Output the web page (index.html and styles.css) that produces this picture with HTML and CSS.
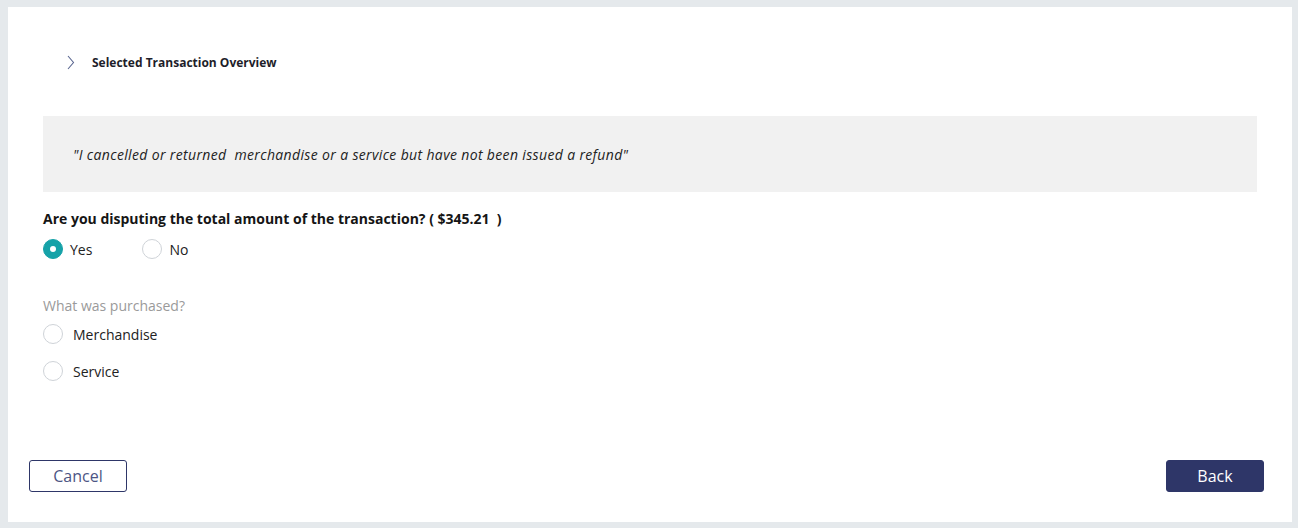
FILE: index.html
```html
<!DOCTYPE html>
<html lang="en">
<head>
    <meta charset="UTF-8">
    <meta name="viewport" content="width=device-width, initial-scale=1.0">
    <title>Dispute Transaction</title>
    <link rel="stylesheet" href="styles.css">
</head>
<body>
    <div class="panel">
        <div class="overview">
            <svg class="chevron" width="8" height="15" viewBox="0 0 8 15">
                <path d="M1 1 L6.5 7.5 L1 14" fill="none" stroke="#5a6690" stroke-width="1.1"/>
            </svg>
            <span class="overview-title">Selected Transaction Overview</span>
        </div>

        <div class="quote">
            <p>"I cancelled or returned&nbsp; merchandise or a service but have not been issued a refund"</p>
        </div>

        <div class="question">Are you disputing the total amount of the transaction? ( $345.21&nbsp; )</div>
        <div class="radio-row">
            <label class="radio"><span class="dot checked"></span>Yes</label>
            <label class="radio no"><span class="dot"></span>No</label>
        </div>

        <div class="sub-label">What was purchased?</div>
        <div class="radio-list">
            <label class="radio wide"><span class="dot"></span>Merchandise</label>
            <label class="radio wide"><span class="dot"></span>Service</label>
        </div>

        <div class="actions">
            <button class="btn btn-outline">Cancel</button>
            <button class="btn btn-primary">Back</button>
        </div>
    </div>
</body>
</html>
```

FILE: styles.css
```css
html, body {
    height: 100%;
}

body {
    margin: 0;
    padding: 7px 6px 6px 8px;
    box-sizing: border-box;
    background-color: #e5e9ec;
    font-family: "Open Sans", "Noto Sans", sans-serif;
    color: #1a1a1a;
}

.panel {
    background-color: #ffffff;
    height: 100%;
    box-sizing: border-box;
    padding: 0 35px 0 35px;
    display: flex;
    flex-direction: column;
}

.overview {
    display: flex;
    align-items: center;
    height: 110px;
    padding-left: 24px;
    padding-top: 1px;
    box-sizing: border-box;
}

.overview .chevron {
    margin-right: 17px;
}

.overview-title {
    font-size: 12px;
    font-weight: 700;
    color: #1e1e2a;
}

.quote {
    background-color: #f1f1f1;
    height: 76px;
    display: flex;
    align-items: center;
    padding-left: 30px;
    margin-top: -1px;
}

.quote p {
    margin: 0;
    font-size: 14px;
    font-style: italic;
    color: #222;
    letter-spacing: 0.35px;
}

.question {
    margin-top: 17px;
    font-size: 14px;
    font-weight: 700;
    color: #151515;
    line-height: 20px;
}

.radio-row {
    display: flex;
    margin-top: 10px;
}

.radio {
    display: flex;
    align-items: center;
    font-size: 14px;
    color: #222;
    height: 20px;
}

.radio .dot {
    width: 18px;
    height: 18px;
    border: 1px solid #cfd3d8;
    border-radius: 50%;
    margin-right: 7px;
    box-sizing: content-box;
    flex-shrink: 0;
}

.radio .dot.checked {
    border-color: #16a2a8;
    background-color: #16a2a8;
    position: relative;
}

.radio .dot.checked::after {
    content: "";
    position: absolute;
    left: 6px;
    top: 6px;
    width: 6px;
    height: 6px;
    border-radius: 50%;
    background-color: #ffffff;
}

.radio.no {
    margin-left: 50px;
}

.radio.wide .dot {
    margin-right: 10px;
}

.sub-label {
    margin-top: 37px;
    font-size: 14px;
    color: #9a9a9a;
    line-height: 20px;
}

.radio-list {
    display: flex;
    flex-direction: column;
    gap: 17px;
    margin-top: 8px;
}

.actions {
    margin-top: auto;
    margin-bottom: 30px;
    margin-left: -14px;
    margin-right: -7px;
    display: flex;
    justify-content: space-between;
}

.btn {
    width: 98px;
    height: 32px;
    font-family: "Open Sans", "Noto Sans", sans-serif;
    font-size: 16px;
    border-radius: 3px;
    cursor: pointer;
}

.btn-outline {
    background-color: #ffffff;
    border: 1px solid #2e3668;
    color: #4d5584;
}

.btn-primary {
    background-color: #2e3668;
    border: 1px solid #2e3668;
    color: #ffffff;
}
```
